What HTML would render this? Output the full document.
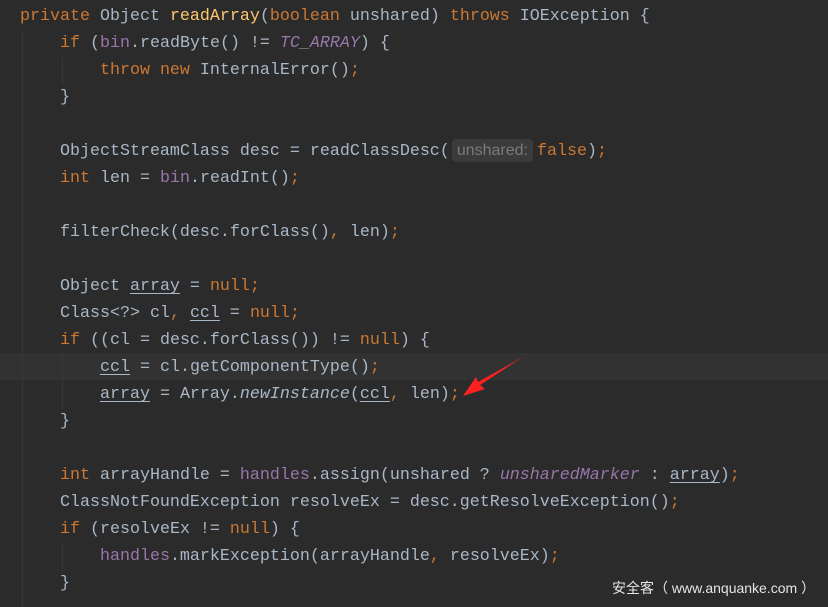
<!DOCTYPE html>
<html><head><meta charset="utf-8"><style>
html,body{margin:0;padding:0;background:#2b2b2b;width:828px;height:607px;overflow:hidden;position:relative}
.code{position:absolute;left:20px;top:3px;margin:0;font-family:"Liberation Mono",monospace;font-size:16.67px;line-height:27px;color:#a9b7c6;white-space:pre}
.k{color:#cc7832}.m{color:#ffc66d}.f{color:#9876aa;font-style:italic}.i{font-style:italic}.u{text-decoration:underline;text-underline-offset:3px}
.hl{position:absolute;left:0;top:353px;width:828px;height:27px;background:#323232}
.g{position:absolute;width:1px;background:#373737}
.hint{display:inline-block;background:#3b3b3b;color:#7a7a7a;font-family:"Liberation Sans",sans-serif;font-size:16px;line-height:23px;padding:0 5px;border-radius:4px;margin:0 4px 0 2px;vertical-align:0px}
.wm{position:absolute;left:612px;top:578px;color:#e6e6e6;font-family:"Liberation Sans","Noto Sans CJK SC",sans-serif;font-size:14px}
</style></head><body>
<div class="hl"></div>
<div class="g" style="left:22px;top:30px;height:577px"></div>
<div class="g" style="left:62px;top:57px;height:28px"></div>
<div class="g" style="left:62px;top:354px;height:55px"></div>
<div class="g" style="left:62px;top:543px;height:28px"></div>
<pre class="code"><span class="k">private</span> Object <span class="m">readArray</span>(<span class="k">boolean</span> unshared) <span class="k">throws</span> IOException {
    <span class="k">if</span> (<span style="color:#9876aa">bin</span>.readByte() != <span class="f">TC_ARRAY</span>) {
        <span class="k">throw new</span> InternalError()<span class="k">;</span>
    }

    ObjectStreamClass desc = readClassDesc(<span class="hint">unshared:</span><span class="k">false</span>)<span class="k">;</span>
    <span class="k">int</span> len = <span style="color:#9876aa">bin</span>.readInt()<span class="k">;</span>

    filterCheck(desc.forClass()<span class="k">,</span> len)<span class="k">;</span>

    Object <span class="u">array</span> = <span class="k">null;</span>
    Class&lt;?&gt; cl<span class="k">,</span> <span class="u">ccl</span> = <span class="k">null;</span>
    <span class="k">if</span> ((cl = desc.forClass()) != <span class="k">null</span>) {
        <span class="u">ccl</span> = cl.getComponentType()<span class="k">;</span>
        <span class="u">array</span> = Array.<span class="i">newInstance</span>(<span class="u">ccl</span><span class="k">,</span> len)<span class="k">;</span>
    }

    <span class="k">int</span> arrayHandle = <span style="color:#9876aa">handles</span>.assign(unshared ? <span class="f">unsharedMarker</span> : <span class="u">array</span>)<span class="k">;</span>
    ClassNotFoundException resolveEx = desc.getResolveException()<span class="k">;</span>
    <span class="k">if</span> (resolveEx != <span class="k">null</span>) {
        <span style="color:#9876aa">handles</span>.markException(arrayHandle<span class="k">,</span> resolveEx)<span class="k">;</span>
    }</pre>
<svg style="position:absolute;left:0;top:0" width="828" height="607">
<polygon points="523,357 480,385 485,389 463,396 476,377 478,382" fill="#ff2020"/>
</svg>
<div class="wm">安全客（ www.anquanke.com ）</div>
</body></html>
